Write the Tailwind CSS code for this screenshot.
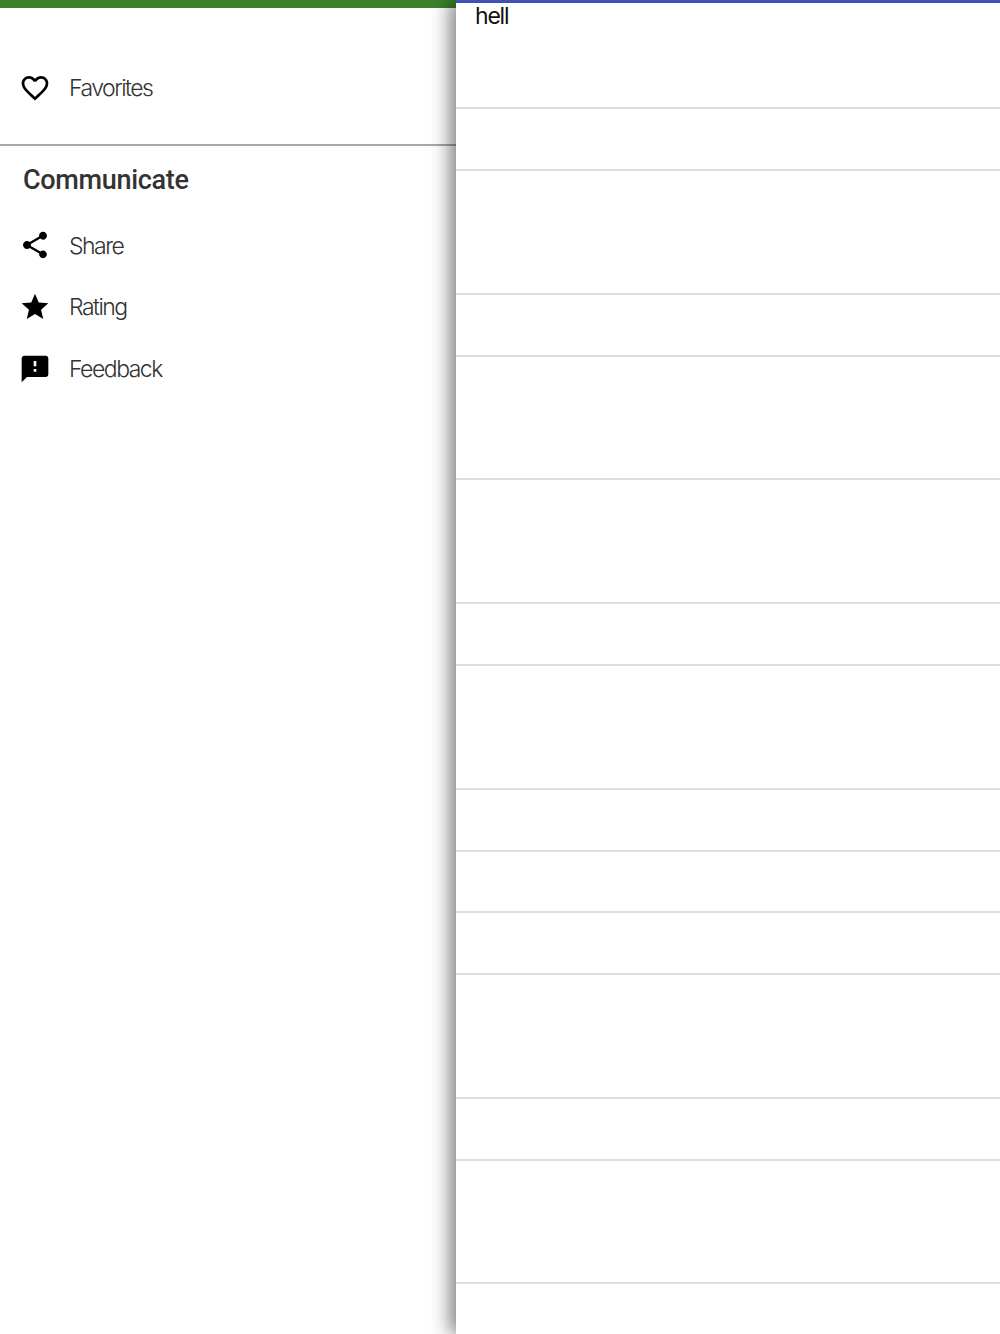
<!DOCTYPE html>
<html lang="en">
<head>
  <meta charset="UTF-8" />
  <meta name="viewport" content="width=device-width, initial-scale=1.0"/>
  <title>Drawer</title>
  <script src="https://cdn.jsdelivr.net/npm/@tailwindcss/browser@4"></script>
</head>
<body class="flex h-[1334px] overflow-hidden bg-white font-['Inter',sans-serif]">

  <!-- Drawer -->
  <aside class="w-[456px] shrink-0 flex flex-col">
    <div class="h-2 bg-[#3d8228]"></div>
    <div class="h-[138px] border-b-2 border-[#a8a8a8] pt-[49px]">
      <a class="flex items-center h-[62px] pl-[19px] text-[23px] font-light text-[#333] tracking-[-1.5px]">
        <svg class="w-[32px] h-[32px] mr-[18px] -mt-[1px]" viewBox="0 0 24 24" fill="#000"><path d="M16.5 3c-1.74 0-3.41.81-4.5 2.09C10.91 3.81 9.24 3 7.5 3 4.42 3 2 5.42 2 8.5c0 3.78 3.4 6.86 8.55 11.54L12 21.35l1.45-1.32C18.6 15.36 22 12.28 22 8.5 22 5.42 19.58 3 16.5 3zm-4.4 15.55l-.1.1-.1-.1C7.14 14.24 4 11.39 4 8.5 4 6.5 5.5 5 7.5 5c1.54 0 3.04.99 3.57 2.36h1.87C13.46 5.99 14.96 5 16.5 5c2 0 3.5 1.5 3.5 3.5 0 2.89-3.14 5.74-7.9 10.05z"/></svg>
        Favorites
      </a>
    </div>
    <h2 class="pl-[23px] mt-[14px] h-[40px] text-[27px] leading-[40px] font-['Roboto'] font-medium text-[#333] tracking-[-0.3px]">Communicate</h2>
    <nav class="mt-[15px] flex flex-col text-[23px] font-light text-[#333] tracking-[-1.5px]">
      <a class="flex items-center h-[61.75px] pl-[19px]">
        <svg class="w-[32px] h-[32px] mr-[18px] -mt-[1px]" viewBox="0 0 24 24" fill="#000"><path d="M18 16.08c-.76 0-1.44.3-1.96.77L8.91 12.7c.05-.23.09-.46.09-.7s-.04-.47-.09-.7l7.05-4.11c.54.5 1.25.81 2.04.81 1.66 0 3-1.34 3-3s-1.34-3-3-3-3 1.34-3 3c0 .24.04.47.09.7L8.04 9.81C7.5 9.31 6.79 9 6 9c-1.66 0-3 1.34-3 3s1.34 3 3 3c.79 0 1.5-.31 2.04-.81l7.12 4.16c-.05.21-.08.43-.08.65 0 1.61 1.31 2.92 2.92 2.92s2.92-1.31 2.92-2.92-1.31-2.92-2.92-2.92z"/></svg>
        Share
      </a>
      <a class="flex items-center h-[61.75px] pl-[19px]">
        <svg class="w-[32px] h-[32px] mr-[18px] -mt-[1px]" viewBox="0 0 24 24" fill="#000"><path d="M12 17.27L18.18 21l-1.64-7.03L22 9.24l-7.19-.61L12 2 9.19 8.63 2 9.24l5.46 4.73L5.82 21z"/></svg>
        Rating
      </a>
      <a class="flex items-center h-[61.75px] pl-[19px]">
        <svg class="w-[32px] h-[32px] mr-[18px] -mt-[1px]" viewBox="0 0 24 24" fill="#000"><path d="M20 2H4c-1.1 0-1.99.9-1.99 2L2 22l4-4h14c1.1 0 2-.9 2-2V4c0-1.1-.9-2-2-2zm-7 12h-2v-2h2v2zm0-4h-2V6h2v4z"/></svg>
        Feedback
      </a>
    </nav>
  </aside>

  <!-- Main list -->
  <main class="relative z-10 flex-1 flex flex-col bg-white border-t-[3px] border-[#3f51b5] shadow-[-6px_0_18px_rgba(0,0,0,0.5)]">
    <div class="h-[106px] pl-[19px] border-b-2 border-[#dcdcdc] text-[23px] leading-[26px] font-normal text-[#111] tracking-[-1.2px]">hell</div>
    <div class="h-[62px] border-b-2 border-[#dcdcdc]"></div>
    <div class="h-[124px] border-b-2 border-[#dcdcdc]"></div>
    <div class="h-[62px] border-b-2 border-[#dcdcdc]"></div>
    <div class="h-[123px] border-b-2 border-[#dcdcdc]"></div>
    <div class="h-[124px] border-b-2 border-[#dcdcdc]"></div>
    <div class="h-[62px] border-b-2 border-[#dcdcdc]"></div>
    <div class="h-[124px] border-b-2 border-[#dcdcdc]"></div>
    <div class="h-[62px] border-b-2 border-[#dcdcdc]"></div>
    <div class="h-[61px] border-b-2 border-[#dcdcdc]"></div>
    <div class="h-[62px] border-b-2 border-[#dcdcdc]"></div>
    <div class="h-[124px] border-b-2 border-[#dcdcdc]"></div>
    <div class="h-[62px] border-b-2 border-[#dcdcdc]"></div>
    <div class="h-[123px] border-b-2 border-[#dcdcdc]"></div>
  </main>

</body>
</html>
